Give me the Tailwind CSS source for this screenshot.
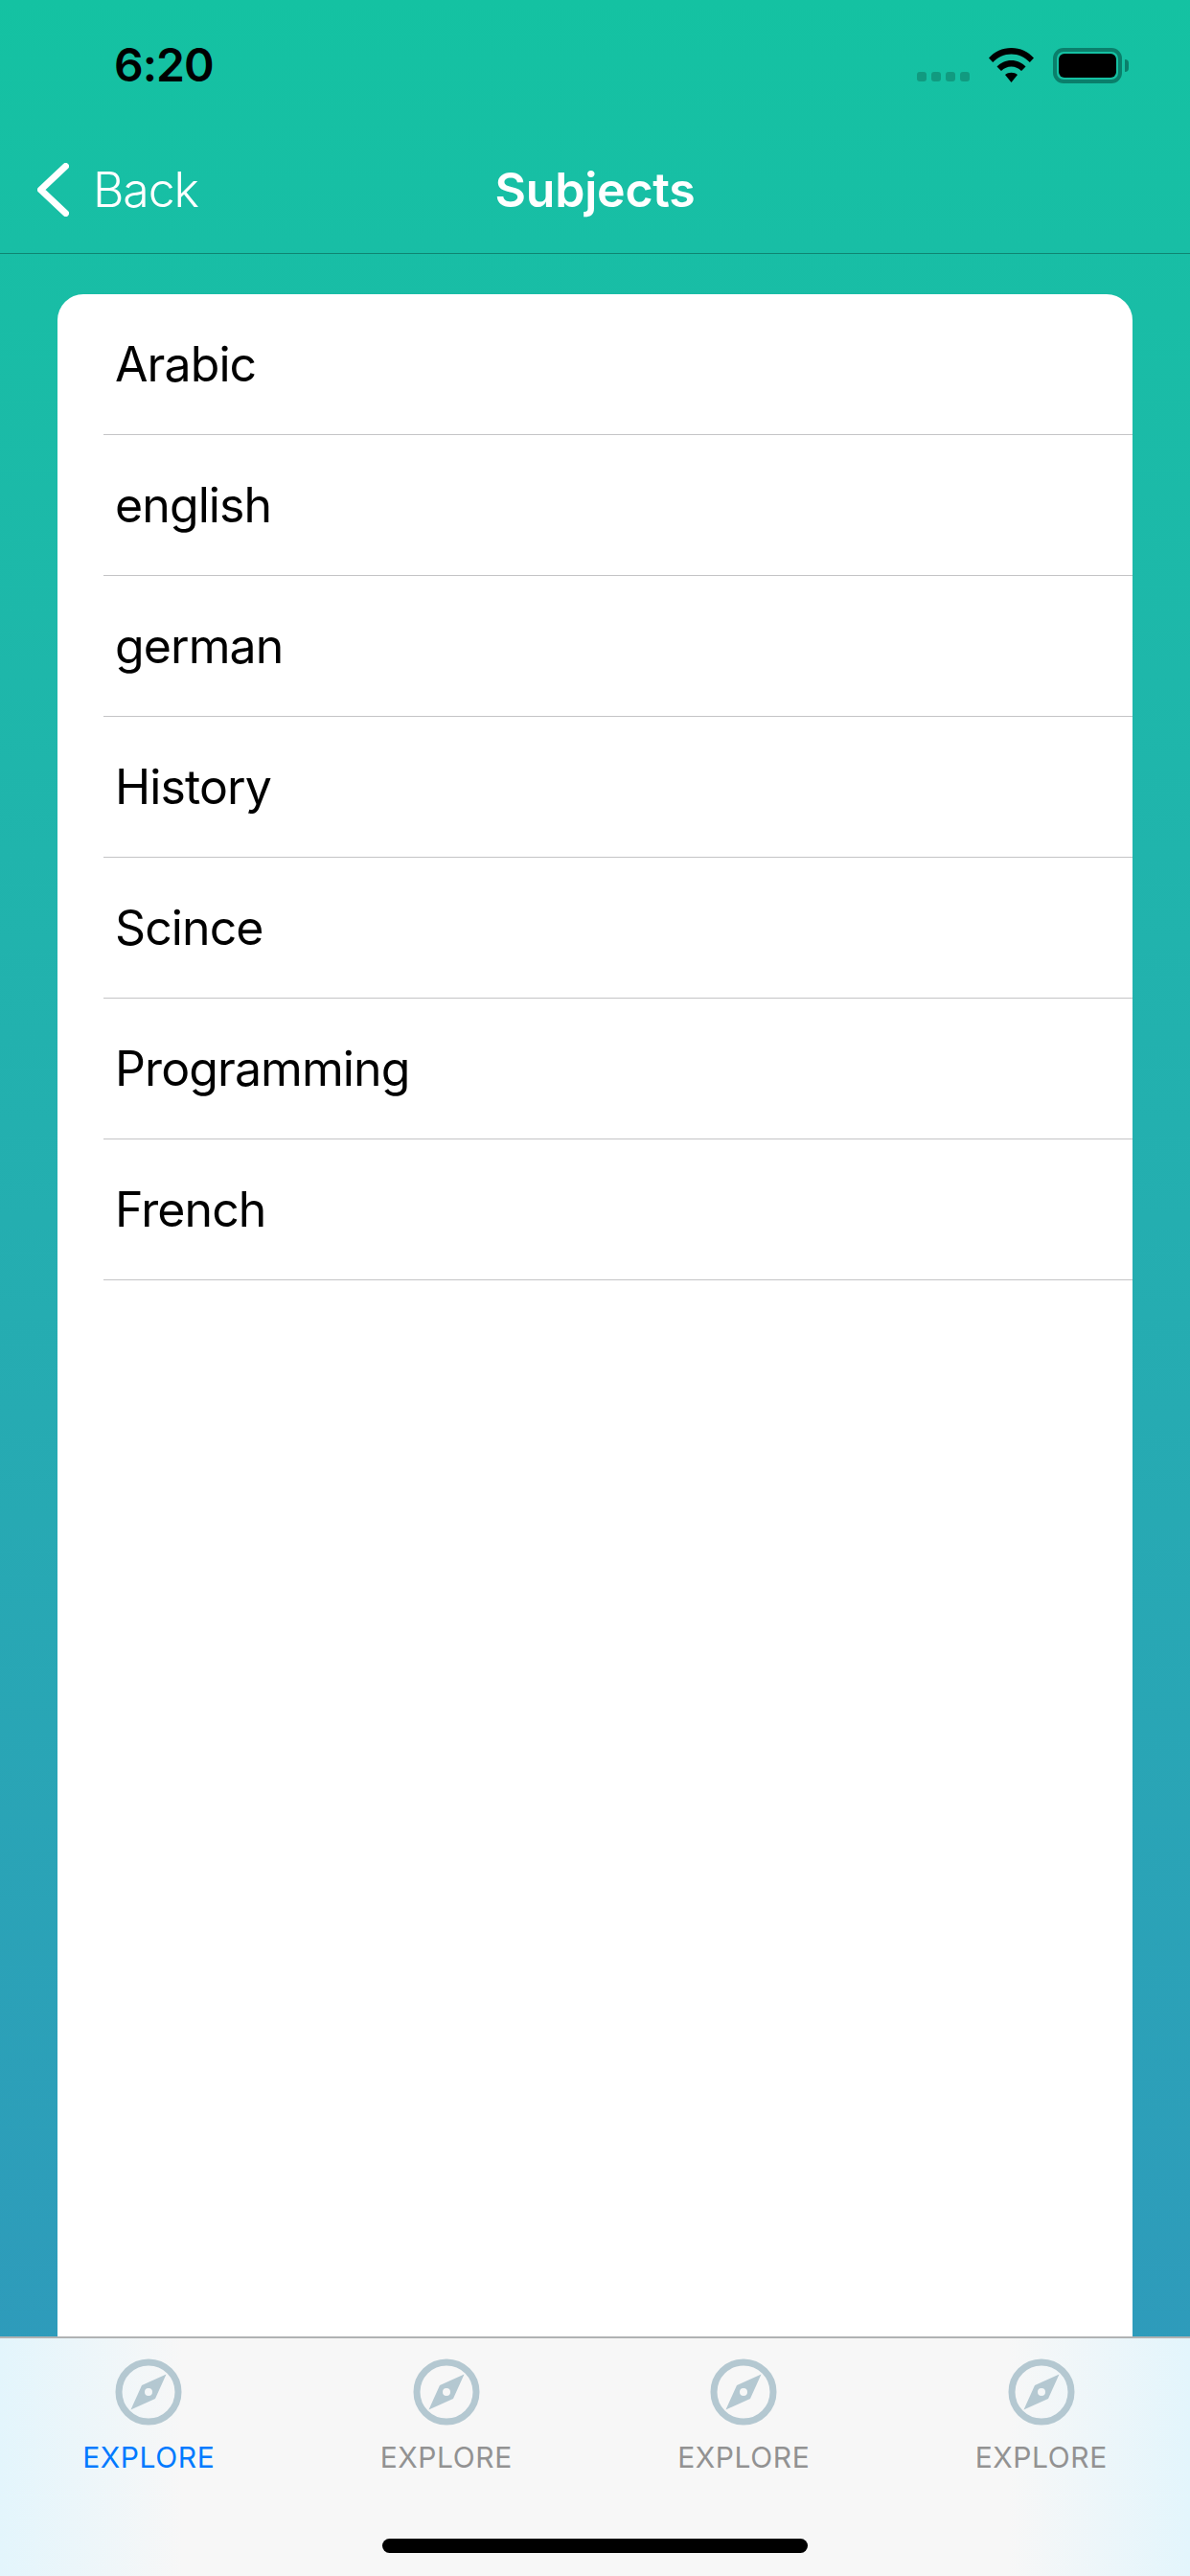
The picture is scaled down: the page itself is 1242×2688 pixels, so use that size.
<!DOCTYPE html>
<html lang="en">
  <head>
    <meta charset="UTF-8" />
    <title>Subjects</title>
    <meta name="viewport" content="width=device-width, initial-scale=1.0" />
    <script src="https://cdn.jsdelivr.net/npm/@tailwindcss/browser@4"></script>
  </head>
  <body class="font-[Inter,sans-serif]">
    <div class="flex flex-col w-[1242px] h-[2688px] overflow-hidden bg-linear-to-b from-[#14c2a2] to-[#3097bd]">
      <!-- Status bar -->
      <div class="flex items-center justify-between h-[132px] pl-[119px] pr-[64px] pt-[4px]">
        <span class="text-[48px] leading-none font-semibold tracking-[-1px] text-black">6:20</span>
        <div class="flex items-center">
          <div class="flex gap-[5px] mt-[24px] mr-[20px]">
            <span class="w-[10px] h-[10px] rounded-[3px] bg-[#119a80]"></span>
            <span class="w-[10px] h-[10px] rounded-[3px] bg-[#119a80]"></span>
            <span class="w-[10px] h-[10px] rounded-[3px] bg-[#119a80]"></span>
            <span class="w-[10px] h-[10px] rounded-[3px] bg-[#119a80]"></span>
          </div>
          <svg class="w-[47px] h-[36px] mr-[20px]" viewBox="0 0 47 36" fill="black">
            <path d="M0 10.5C6 4 14 0 23.5 0S41 4 47 10.5L42.8 15C37.8 9.800 31 6.500 23.500 6.500S9.200 9.800 4.200 15Z" />
            <path d="M8.500 19.500C12.500 15.500 17.500 13 23.500 13S34.500 15.500 38.500 19.500L34 24C31 21.300 27.500 19.600 23.500 19.600S16 21.300 13 24Z" />
            <path d="M17 28C18.800 26.600 21 25.700 23.500 25.700S28.200 26.600 30 28L23.500 36Z" />
          </svg>
          <div class="w-[72px] h-[37px] rounded-[11px] border-[4px] border-[#0a7f6b] p-[2px]">
            <div class="w-full h-full rounded-[6px] bg-black"></div>
          </div>
          <div class="w-[4px] h-[13px] ml-[3px] rounded-r-full bg-[#0a7f6b]"></div>
        </div>
      </div>

      <!-- Nav bar -->
      <div class="grid grid-cols-[1fr_auto_1fr] items-center h-[133px] border-b border-[#0f8572] pb-[1px]">
        <div class="flex items-center pl-[39px]">
          <svg class="w-[33px] h-[56px] shrink-0" viewBox="0 0 33 56" fill="none" stroke="white" stroke-width="7" stroke-linecap="round" stroke-linejoin="round">
            <path d="M29.500 3.500 3.500 28 29.500 52.500" />
          </svg>
          <span class="ml-[25px] text-[50px] leading-none font-[350] tracking-[-1.1px] text-white">Back</span>
        </div>
        <span class="text-[50px] leading-none font-semibold tracking-[-0.2px] text-white">Subjects</span>
        <div></div>
      </div>

      <!-- Subject list -->
      <div class="flex-1 min-h-0 px-[60px] pt-[42px]">
        <div class="h-full bg-white rounded-t-[27px] overflow-hidden">
          <div class="flex items-center h-[147px] ml-[48px] pl-[12px] pt-[1px] border-b border-[#c4c4c6] text-[50px] tracking-[-0.9px] text-black">Arabic</div>
          <div class="flex items-center h-[147px] ml-[48px] pl-[12px] pt-[1px] border-b border-[#c4c4c6] text-[50px] tracking-[-0.9px] text-black">english</div>
          <div class="flex items-center h-[147px] ml-[48px] pl-[12px] pt-[1px] border-b border-[#c4c4c6] text-[50px] tracking-[-0.9px] text-black">german</div>
          <div class="flex items-center h-[147px] ml-[48px] pl-[12px] pt-[1px] border-b border-[#c4c4c6] text-[50px] tracking-[-0.9px] text-black">History</div>
          <div class="flex items-center h-[147px] ml-[48px] pl-[12px] pt-[1px] border-b border-[#c4c4c6] text-[50px] tracking-[-0.9px] text-black">Scince</div>
          <div class="flex items-center h-[147px] ml-[48px] pl-[12px] pt-[1px] border-b border-[#c4c4c6] text-[50px] tracking-[-0.9px] text-black">Programming</div>
          <div class="flex items-center h-[147px] ml-[48px] pl-[12px] pt-[1px] border-b border-[#c4c4c6] text-[50px] tracking-[-0.9px] text-black">French</div>
        </div>
      </div>

      <!-- Tab bar -->
      <div class="flex flex-col items-center h-[250px] border-t-2 border-[#b0b2b3] bg-[linear-gradient(90deg,#e3f5fc_0px,#f7f7f7_190px,#f7f7f7_1052px,#e3f5fc_1242px)]">
        <div class="grid grid-cols-4 w-full pt-[21px]">
          <div class="flex flex-col items-center">
            <svg class="w-[70px] h-[70px]" viewBox="0 0 70 70">
              <circle cx="35" cy="35" r="31" fill="none" stroke="#b4c8d1" stroke-width="7" />
              <path fill-rule="evenodd" fill="#b4c8d1" d="M53.500 16.500 42 42 16.500 53.500 28 28ZM35 31a4 4 0 1 0 0 8 4 4 0 0 0 0-8Z" />
            </svg>
            <span class="mt-[15px] text-[30px] leading-[36px] tracking-[0.6px] text-[#007aff]">EXPLORE</span>
          </div>
          <div class="flex flex-col items-center">
            <svg class="w-[70px] h-[70px]" viewBox="0 0 70 70">
              <circle cx="35" cy="35" r="31" fill="none" stroke="#b4c8d1" stroke-width="7" />
              <path fill-rule="evenodd" fill="#b4c8d1" d="M53.500 16.500 42 42 16.500 53.500 28 28ZM35 31a4 4 0 1 0 0 8 4 4 0 0 0 0-8Z" />
            </svg>
            <span class="mt-[15px] text-[30px] leading-[36px] tracking-[0.6px] text-[#929292]">EXPLORE</span>
          </div>
          <div class="flex flex-col items-center">
            <svg class="w-[70px] h-[70px]" viewBox="0 0 70 70">
              <circle cx="35" cy="35" r="31" fill="none" stroke="#b4c8d1" stroke-width="7" />
              <path fill-rule="evenodd" fill="#b4c8d1" d="M53.500 16.500 42 42 16.500 53.500 28 28ZM35 31a4 4 0 1 0 0 8 4 4 0 0 0 0-8Z" />
            </svg>
            <span class="mt-[15px] text-[30px] leading-[36px] tracking-[0.6px] text-[#929292]">EXPLORE</span>
          </div>
          <div class="flex flex-col items-center">
            <svg class="w-[70px] h-[70px]" viewBox="0 0 70 70">
              <circle cx="35" cy="35" r="31" fill="none" stroke="#b4c8d1" stroke-width="7" />
              <path fill-rule="evenodd" fill="#b4c8d1" d="M53.500 16.500 42 42 16.500 53.500 28 28ZM35 31a4 4 0 1 0 0 8 4 4 0 0 0 0-8Z" />
            </svg>
            <span class="mt-[15px] text-[30px] leading-[36px] tracking-[0.6px] text-[#929292]">EXPLORE</span>
          </div>
        </div>
        <div class="w-[444px] h-[15px] mt-[67px] rounded-full bg-black"></div>
      </div>
    </div>
  </body>
</html>
